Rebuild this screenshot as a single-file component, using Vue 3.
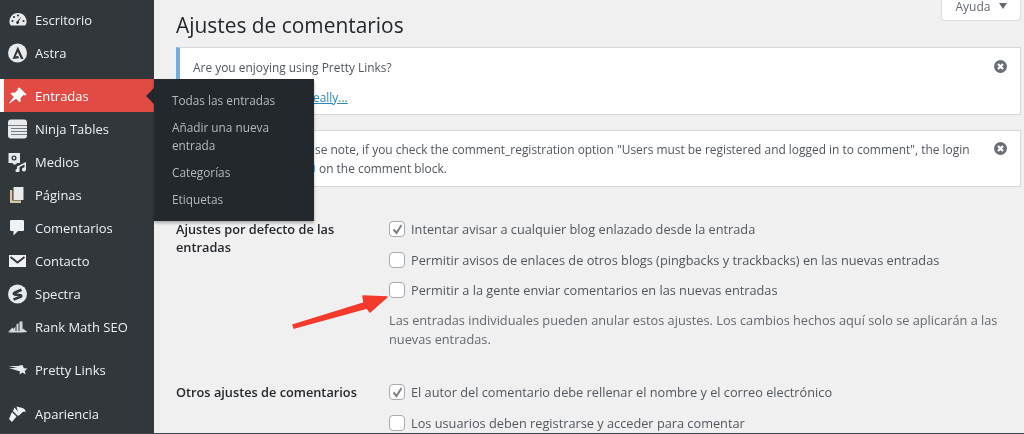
<script setup>
const menuTop = [
  { label: 'Escritorio', icon: 'dash' },
  { label: 'Astra', icon: 'astra' },
]
const menuMid = [
  { label: 'Ninja Tables', icon: 'table' },
  { label: 'Medios', icon: 'media' },
  { label: 'Páginas', icon: 'pages' },
  { label: 'Comentarios', icon: 'comment' },
  { label: 'Contacto', icon: 'mail' },
  { label: 'Spectra', icon: 'spectra' },
  { label: 'Rank Math SEO', icon: 'rank' },
]
const flyout = ['Todas las entradas', 'Añadir una nueva entrada', 'Categorías', 'Etiquetas']
</script>

<template>
  <div class="page">
    <aside class="side">
      <div v-for="m in menuTop" :key="m.label" class="item">
        <span class="ico">
          <svg v-if="m.icon === 'dash'" width="20" height="20" viewBox="0 0 20 20"><path fill="#e8eaeb" d="M10 3a8.500 8.500 0 0 0-8.300 10.600c.2.800.6 1.400 1.200 1.900h14.200c.6-.5 1-1.100 1.200-1.900A8.500 8.500 0 0 0 10 3z"/><g fill="#32373c"><circle cx="4.500" cy="11" r="1.100"/><circle cx="6" cy="7" r="1.100"/><circle cx="10" cy="5.500" r="1.100"/><circle cx="15.500" cy="11" r="1.100"/><path d="M13.500 6.500 10.800 11.600a1.500 1.500 0 1 1-1.500-.6z"/></g></svg>
          <svg v-else width="20" height="20" viewBox="0 0 20 20"><circle cx="9.500" cy="10" r="9.500" fill="#e8eaeb"/><path fill="#32373c" d="M9.800 3.500 15.500 16H13L9.800 9 7.600 13.500 10 12.800l1.200 2.400L4.500 16z"/></svg>
        </span>
        <span class="lbl">{{ m.label }}</span>
      </div>

      <div class="item active">
        <span class="ico"><svg width="20" height="20" viewBox="0 0 20 20"><path fill="#fff" d="M11.500 1.500 18.500 8.500l-1.500 1-1.500-.5-3 3 .3 3-1.300 1.300-3.400-3.600L1.500 17.500l-.5-.5 4.800-6L2.500 7.800l1.400-1.400 3 .4 3-3-.3-1.500z"/></svg></span>
        <span class="lbl">Entradas</span>
        <i class="notch"></i>
      </div>

      <div v-for="m in menuMid" :key="m.label" class="item">
        <span class="ico">
          <svg v-if="m.icon === 'table'" width="20" height="20" viewBox="0 0 20 20"><rect y="0.500" width="19" height="19" rx="3" fill="#e8eaeb"/><path stroke="#777c81" stroke-width="1" d="M0 6.500h19M3 9.500h16M3 12.500h16M3 15.500h16"/></svg>
          <svg v-else-if="m.icon === 'media'" width="20" height="20" viewBox="0 0 20 20"><path fill="#e8eaeb" d="M0.500 1h11.500v10H9l-1 1.500H5.500L4.500 11H.5z"/><circle cx="6" cy="6" r="2.500" fill="#32373c"/><circle cx="6" cy="6" r="1.200" fill="#e8eaeb"/><path fill="#e8eaeb" d="M9 14.500 18 10v7.500a2 2 0 1 1-1.500-2v-3l-5 2.500v3.500a2 2 0 1 1-2.500-1.800z"/></svg>
          <svg v-else-if="m.icon === 'pages'" width="20" height="20" viewBox="0 0 20 20"><path fill="#e8eaeb" d="M5.500 2H15.500V15H5.500z"/><path fill="#d9c9a0" d="M2 5h2.300v10.500H13V18H2z"/></svg>
          <svg v-else-if="m.icon === 'comment'" width="20" height="20" viewBox="0 0 20 20"><path fill="#f0f1f2" d="M3.500 2h11c1 0 1.500.5 1.500 1.500v8c0 1-.5 1.500-1.500 1.500H10l-4.500 4.500V13H3.500c-1 0-1.500-.5-1.500-1.500v-8C2 2.500 2.500 2 3.500 2z"/></svg>
          <svg v-else-if="m.icon === 'mail'" width="20" height="20" viewBox="0 0 20 20"><path fill="#f0f1f2" d="M1 4h17v12H1z"/><path fill="none" stroke="#32373c" stroke-width="1.800" d="M2.500 6 9.500 11.500 16.500 6"/></svg>
          <svg v-else-if="m.icon === 'spectra'" width="20" height="20" viewBox="0 0 20 20"><circle cx="9.500" cy="10" r="9.500" fill="#e8eaeb"/><path fill="none" stroke="#32373c" stroke-width="2.600" stroke-linejoin="round" d="M13.500 5.800 6.500 8.800c-1 .5-.9 1.200 0 1.600l6 .8c1 .4 1 1.200 0 1.700l-7 2.600"/></svg>
          <svg v-else width="20" height="20" viewBox="0 0 20 20"><path fill="#d5d8da" d="M0 15 4.500 10.500l1 1.500 2-2.500v4.500H7zM8.500 7l2-.5v7.500h-2zM11.500 4.500h3v9.500h-3zM15 11.500l4.500 3.500-5.500 .5H3L0 16.500l4-2.500h10z"/></svg>
        </span>
        <span class="lbl">{{ m.label }}</span>
      </div>

      <div class="item sep">
        <span class="ico"><svg width="20" height="20" viewBox="0 0 20 20"><path fill="#e8eaeb" d="M14.500 5l1.400 3.300 3.600.3-2.700 2.400.8 3.500-3.100-1.900-3.100 1.900.7-3L1 8h8.500L.5 6H9.500z"/></svg></span>
        <span class="lbl">Pretty Links</span>
      </div>

      <div class="item sep last">
        <span class="ico"><svg width="20" height="20" viewBox="0 0 20 20"><path fill="#f0f1f2" d="M8.500 2.500 14.500 4c1 .3 2.500 1.500 3.500 3.500-1 .2-2.500 0-3.200.5l-3.800 3.500z"/><path fill="#f0f1f2" d="M6.500 3.500 12 10l-2 2-5-5zM4 8l4.500 4.500L4 18l-3-3z"/></svg></span>
        <span class="lbl">Apariencia</span>
      </div>

      <div class="fly">
        <div v-for="f in flyout" :key="f" class="fly-item">{{ f }}</div>
      </div>
    </aside>

    <main class="main">
      <div class="help">Ayuda <span class="caret"></span></div>
      <h1 class="title">Ajustes de comentarios</h1>

      <div class="notice blue">
        <p>Are you enjoying using Pretty Links?</p>
        <p class="second"><a>eally...</a></p>
        <span class="close"><svg width="13" height="13" viewBox="0 0 13 13"><circle cx="6.500" cy="6.500" r="6.500" fill="#6a6f75"/><path stroke="#fff" stroke-width="2.200" d="M4 4l5 5M9 4l-5 5"/></svg></span>
      </div>

      <div class="notice plain">
        <p>se note, if you check the comment_registration option "Users must be registered and logged in to comment", the login</p>
        <p class="line2"><i class="frag"></i>on the comment block.</p>
        <span class="close"><svg width="13" height="13" viewBox="0 0 13 13"><circle cx="6.500" cy="6.500" r="6.500" fill="#6a6f75"/><path stroke="#fff" stroke-width="2.200" d="M4 4l5 5M9 4l-5 5"/></svg></span>
      </div>

      <section class="row first">
        <div class="th">Ajustes por defecto de las entradas</div>
        <div class="td">
          <label class="opt"><span class="cb"><svg width="13" height="13" viewBox="0 0 13 13"><path fill="none" stroke="#7d8287" stroke-width="2" d="M2.500 6.500 5.500 10l5-8"/></svg></span>Intentar avisar a cualquier blog enlazado desde la entrada</label>
          <label class="opt"><span class="cb"></span>Permitir avisos de enlaces de otros blogs (pingbacks y trackbacks) en las nuevas entradas</label>
          <label class="opt"><span class="cb"></span>Permitir a la gente enviar comentarios en las nuevas entradas</label>
          <p class="desc">Las entradas individuales pueden anular estos ajustes. Los cambios hechos aquí solo se aplicarán a las nuevas entradas.</p>
        </div>
      </section>

      <section class="row second-row">
        <div class="th">Otros ajustes de comentarios</div>
        <div class="td">
          <label class="opt"><span class="cb"><svg width="13" height="13" viewBox="0 0 13 13"><path fill="none" stroke="#7d8287" stroke-width="2" d="M2.500 6.500 5.500 10l5-8"/></svg></span>El autor del comentario debe rellenar el nombre y el correo electrónico</label>
          <label class="opt"><span class="cb"></span>Los usuarios deben registrarse y acceder para comentar</label>
        </div>
      </section>

      <svg class="arrow" width="100" height="42" viewBox="0 0 100 42"><path fill="#f4392d" stroke="#f4392d" stroke-width="1.500" stroke-linejoin="round" d="M3 35 74 13 73 6 97 7 80 22 77 18 4 38z"/></svg>
    </main>
  </div>
</template>

<style>
html, body { margin: 0; padding: 0; overflow: hidden; background: #f0f0f1; }
</style>

<style scoped>
.page {
  position: relative;
  display: flex;
  width: 1024px;
  height: 434px;
  overflow: hidden;
  font-family: "Open Sans", "Noto Sans", sans-serif;
  font-size: 12.75px;
  color: #50575e;
  background: #f0f0f1;
  filter: blur(0.3px);
}
.page::after {
  content: "";
  position: absolute;
  left: 0;
  right: 0;
  bottom: 0;
  height: 1px;
  background: #3e4449;
}
.side {
  position: relative;
  flex: 0 0 154px;
  background: #32373c;
  padding-top: 3px;
  box-sizing: border-box;
  height: 434px;
}
.item {
  position: relative;
  display: flex;
  align-items: center;
  height: 33px;
  padding-left: 8px;
  color: #eef0f1;
  font-size: 13px;
}
.item.active { margin-top: 10px; }
.ico { display: flex; width: 27px; flex: none; }
.lbl { white-space: nowrap; }
.active {
  background: #e24b43;
  color: #fff;
  border-left: 4px solid #fff;
  padding-left: 4px;
}
.notch {
  position: absolute;
  right: 0;
  top: 9px;
  border: 8px solid transparent;
  border-right-color: #23282d;
}
.sep { margin-top: 10px; }
.last { margin-top: 11px; }
.fly {
  position: absolute;
  left: 154px;
  top: 79px;
  width: 160px;
  height: 142px;
  box-sizing: border-box;
  padding-top: 7px;
  background: #23282d;
  box-shadow: 0 2px 3px rgba(0,0,0,.3);
  z-index: 3;
}
.fly-item {
  padding: 4.500px 18px;
  line-height: 18px;
  font-size: 11.800px;
  color: #b4b9be;
}
.main {
  position: relative;
  flex: 1;
  padding: 0 3px 0 22px;
  min-width: 0;
}
.help {
  position: absolute;
  right: 3px;
  top: 0;
  width: 80px;
  height: 21px;
  box-sizing: border-box;
  background: #fff;
  border: 1px solid #dcdcde;
  border-top: 0;
  border-radius: 0 0 4px 4px;
  text-align: center;
  font-size: 12px;
  line-height: 13px;
  color: #646970;
}
.caret {
  display: inline-block;
  margin-left: 5px;
  border: 4.500px solid transparent;
  border-top: 6px solid #646970;
  border-bottom: 0;
  vertical-align: 2px;
}
.title {
  margin: 0;
  height: 47px;
  padding-top: 9px;
  box-sizing: border-box;
  font-size: 20.900px;
  line-height: 32px;
  font-weight: 400;
  color: #23282d;
}
.notice {
  position: relative;
  background: #fff;
  border: 1px solid #d5d7d9;
  box-sizing: border-box;
  font-size: 11.930px;
}
.notice p { margin: 0; line-height: 19px; white-space: nowrap; }
.blue {
  height: 68px;
  border-left: 4px solid #72aee6;
  padding-left: 13px;
  padding-top: 10px;
}
.second { margin-top: 11px !important; padding-left: 120px; }
.second a { color: #2f86b8; text-decoration: underline; }
.plain {
  height: 57px;
  margin-top: 15px;
  padding: 9px 0 0 138px;
}
.line2 { display: flex; align-items: center; }
.frag {
  width: 2px;
  height: 7px;
  margin: 0 4px 0 -2px;
  background: #6fb0d4;
}
.close { position: absolute; right: 13px; top: 12px; display: flex; }
.plain .close { top: 11px; }
.row { display: flex; }
.first { margin-top: 33px; }
.second-row { margin-top: 34.500px; }
.th {
  flex: 0 0 213px;
  width: 213px;
  padding-right: 30px;
  box-sizing: border-box;
  font-weight: 600;
  color: #23282d;
  line-height: 18px;
}
.td { flex: 1; }
.opt {
  display: flex;
  align-items: center;
  height: 18px;
  margin-bottom: 12.500px;
  white-space: nowrap;
}
.cb {
  flex: none;
  display: flex;
  align-items: center;
  justify-content: center;
  width: 16px;
  height: 16px;
  box-sizing: border-box;
  margin-right: 6px;
  background: #fff;
  border: 1px solid #a7aaad;
  border-radius: 4px;
}
.desc {
  margin: -1px 0 0;
  color: #646970;
  line-height: 19px;
  width: 620px;
}
.arrow {
  position: absolute;
  left: 136px;
  top: 290px;
}
</style>
